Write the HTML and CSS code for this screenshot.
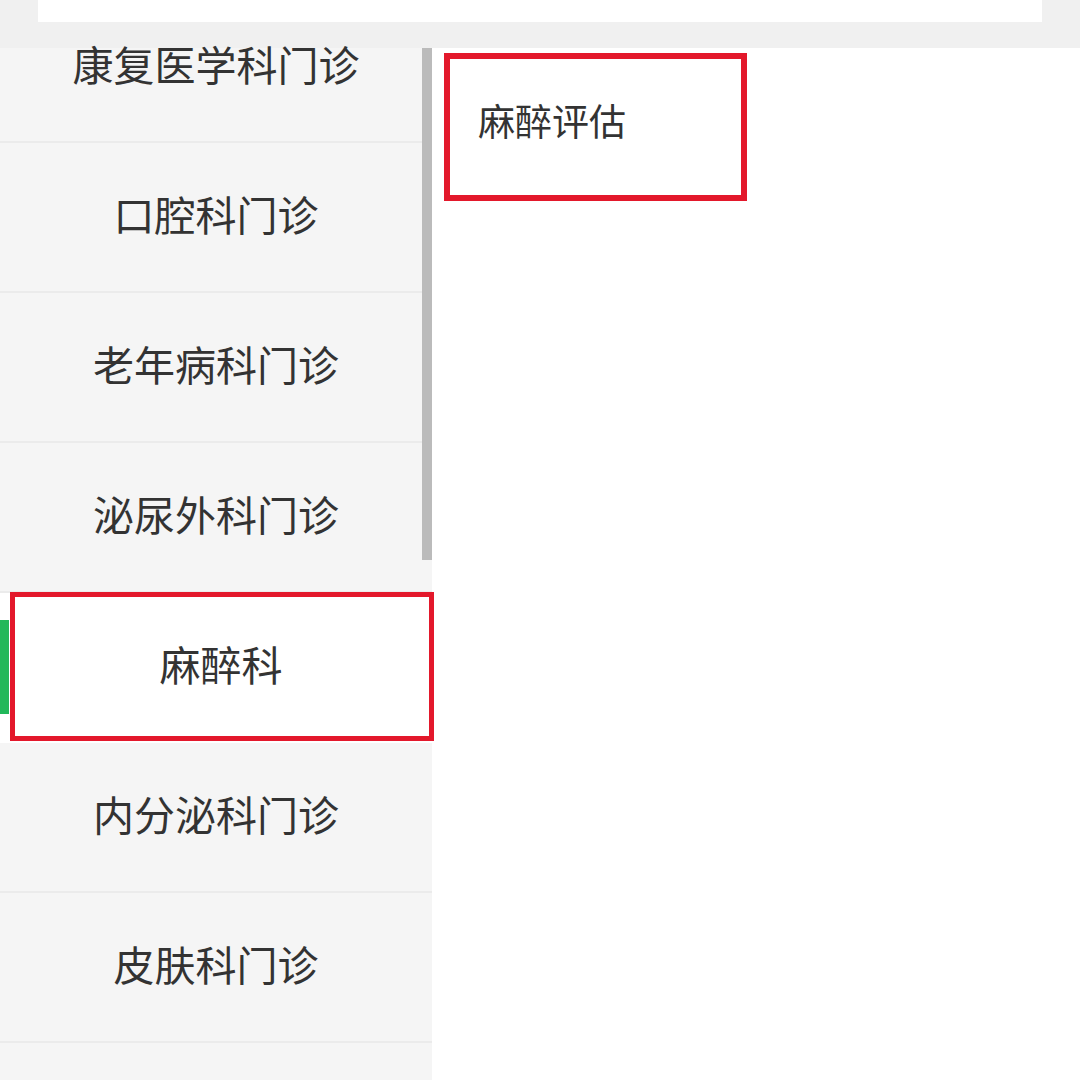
FILE: index.html
```html
<!DOCTYPE html>
<html lang="zh-CN">
<head>
<meta charset="utf-8">
<title>科室选择</title>
<link rel="stylesheet" href="styles.css">
</head>
<body>
<div class="page">
  <header class="top">
    <div class="search"></div>
  </header>
  <main class="main">
    <nav class="side">
      <ul class="list">
        <li class="row">康复医学科门诊</li>
        <li class="row">口腔科门诊</li>
        <li class="row">老年病科门诊</li>
        <li class="row">泌尿外科门诊</li>
        <li class="row active">麻醉科</li>
        <li class="row">内分泌科门诊</li>
        <li class="row">皮肤科门诊</li>
        <li class="row">&nbsp;</li>
      </ul>
      <div class="scrollbar"></div>
      <div class="mark mark-side"></div>
    </nav>
    <section class="content">
      <div class="item">麻醉评估</div>
      <div class="mark mark-item"></div>
    </section>
  </main>
</div>
</body>
</html>
```
FILE: styles.css
```css
* { box-sizing: border-box; }
html, body { margin: 0; padding: 0; background: #ffffff; }
body {
  font-family: "Noto Sans CJK SC", "Noto Sans", sans-serif;
  color: #333333;
}
.page { width: 1080px; height: 1080px; overflow: hidden; }
.top {
  height: 48px;
  background: #f0f0f0;
  padding-left: 38px;
}
.search {
  width: 1004px;
  height: 22px;
  background: #ffffff;
}
.main { display: flex; height: 1032px; }
.side {
  width: 432px;
  flex: 0 0 432px;
  background: #f5f5f5;
  position: relative;
}
.list {
  list-style: none;
  margin: -55px 0 0 0;
  padding: 0;
}
.row {
  height: 150px;
  border-bottom: 2px solid #ebebeb;
  display: flex;
  align-items: center;
  justify-content: center;
  font-size: 41px;
  line-height: 1;
  position: relative;
  padding-bottom: 7px;
}
.row.active {
  background: #ffffff;
  border-bottom-color: #ffffff;
  padding-left: 10px;
}
.row.active::before {
  content: "";
  position: absolute;
  left: 0;
  top: 27px;
  width: 9px;
  height: 94px;
  background: #22b85a;
}
.scrollbar {
  position: absolute;
  right: 0;
  top: 0;
  width: 10px;
  height: 512px;
  background: #bbbbbb;
}
.mark {
  position: absolute;
  border: 5px solid #e3182b;
}
.mark-side {
  left: 10px;
  top: 544px;
  width: 424px;
  height: 149px;
}
.content { flex: 1; position: relative; }
.item {
  height: 148px;
  padding-left: 46px;
  padding-bottom: 4px;
  display: flex;
  align-items: center;
  font-size: 37px;
  line-height: 1;
}
.mark-item {
  left: 12px;
  top: 5px;
  width: 303px;
  height: 148px;
  border-width: 6px;
}
```
